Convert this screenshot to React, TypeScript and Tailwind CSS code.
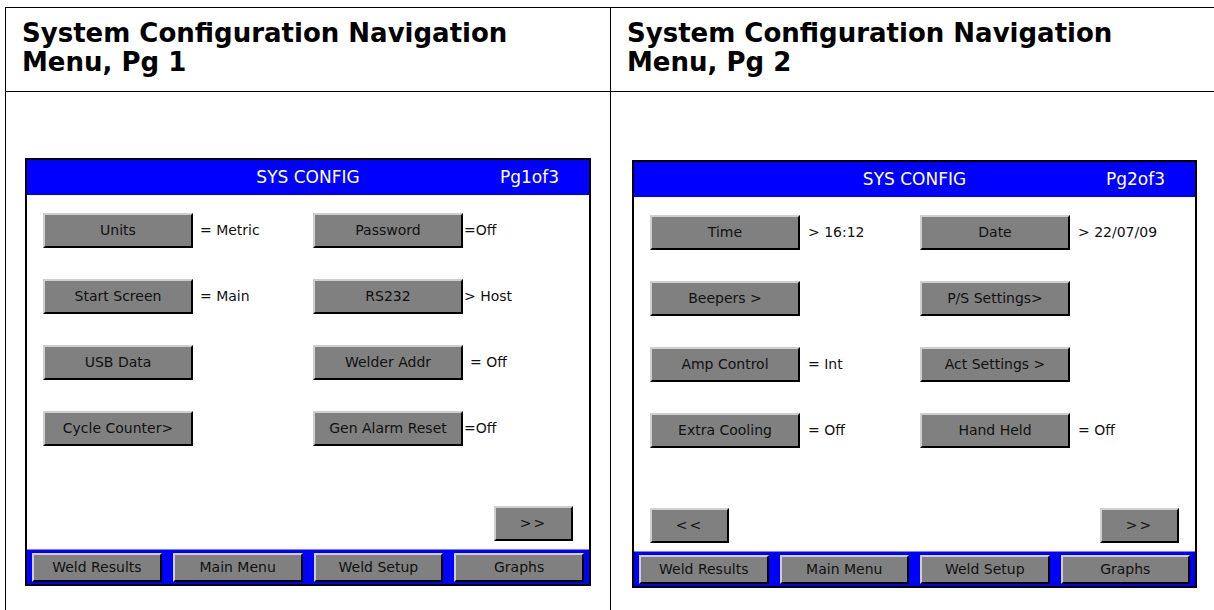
import React from 'react';

type Item = { label: string; value?: string; gap?: number };

const pageOne: Item[][] = [
  [{ label: 'Units', value: '= Metric', gap: 7 }, { label: 'Password', value: '=Off', gap: 1 }],
  [{ label: 'Start Screen', value: '= Main', gap: 7 }, { label: 'RS232', value: '> Host', gap: 1 }],
  [{ label: 'USB Data' }, { label: 'Welder Addr', value: '= Off', gap: 7 }],
  [{ label: 'Cycle Counter>' }, { label: 'Gen Alarm Reset', value: '=Off', gap: 1 }],
];

const pageTwo: Item[][] = [
  [{ label: 'Time', value: '> 16:12', gap: 8 }, { label: 'Date', value: '> 22/07/09', gap: 8 }],
  [{ label: 'Beepers >' }, { label: 'P/S Settings>' }],
  [{ label: 'Amp Control', value: '= Int', gap: 8 }, { label: 'Act Settings >' }],
  [{ label: 'Extra Cooling', value: '= Off', gap: 8 }, { label: 'Hand Held', value: '= Off', gap: 8 }],
];

const tabs = ['Weld Results', 'Main Menu', 'Weld Setup', 'Graphs'];

function Btn({ children, className = '' }: { children: React.ReactNode; className?: string }) {
  return (
    <div
      className={`flex items-center justify-center bg-[#808080] border-2 border-t-[#cfcfcf] border-l-[#cfcfcf] border-r-black border-b-black text-[14px] text-[#111] whitespace-nowrap ${className}`}
    >
      {children}
    </div>
  );
}

function Cell({ item, wide }: { item: Item; wide?: boolean }) {
  return (
    <div className={`flex items-center ${wide ? 'w-[270px]' : ''}`}>
      <Btn className="w-[150px] h-[35px]">{item.label}</Btn>
      {item.value && (
        <span
          className={`text-[14px] text-[#111] whitespace-nowrap ${item.gap === 1 ? 'ml-[1px]' : item.gap === 8 ? 'ml-[8px]' : 'ml-[7px]'}`}
        >
          {item.value}
        </span>
      )}
    </div>
  );
}

function Screen({ page, rows, back, className }: { page: string; rows: Item[][]; back?: boolean; className: string }) {
  return (
    <div className={`flex flex-col border-2 border-black bg-white font-['DejaVu_Sans',sans-serif] ${className}`}>
      <div className="grid h-[35px] shrink-0 grid-cols-[1fr_auto_1fr] items-center bg-[#0000ff] text-[17px] text-white">
        <span />
        <span>SYS CONFIG</span>
        <span className="justify-self-end pr-[30px]">{page}</span>
      </div>
      <div className="flex flex-1 flex-col px-[16px] pt-[18px] pb-[8px]">
        <div className="flex flex-col gap-[31px]">
          {rows.map((r, i) => (
            <div key={i} className="flex items-center">
              <Cell item={r[0]} wide />
              <Cell item={r[1]} />
            </div>
          ))}
        </div>
        <div className="mt-auto flex items-center justify-between">
          {back ? <Btn className="w-[79px] h-[35px] text-[12px] tracking-[2px]">&lt;&lt;</Btn> : <span />}
          <Btn className="w-[79px] h-[35px] text-[12px] tracking-[2px]">&gt;&gt;</Btn>
        </div>
      </div>
      <div className="flex h-[35px] shrink-0 items-center gap-[11px] border-t border-t-[#8080ff] bg-[#0000ff] px-[5px]">
        {tabs.map((t) => (
          <Btn key={t} className="h-[29px] flex-1">
            {t}
          </Btn>
        ))}
      </div>
    </div>
  );
}

export default function App() {
  return (
    <div className="h-[610px] w-[1214px] overflow-hidden bg-white pl-[5px] pt-[7px]">
      <div className="grid w-[1215px] grid-cols-[605px_610px] border-l border-t border-black">
        {/* header row */}
        <div className="h-[84px] border-b border-r border-black pl-[16px] pt-[11px] font-['DejaVu_Sans',sans-serif] text-[26px] font-bold leading-[29px] text-black">
          System Configuration Navigation
          <br />
          Menu, Pg 1
        </div>
        <div className="h-[84px] border-b border-black pl-[16px] pt-[11px] font-['DejaVu_Sans',sans-serif] text-[26px] font-bold leading-[29px] text-black">
          System Configuration Navigation
          <br />
          Menu, Pg 2
        </div>
        {/* screens */}
        <div className="h-[530px] border-r border-black pl-[19px] pt-[66px]">
          <Screen page="Pg1of3" rows={pageOne} className="h-[428px] w-[566px]" />
        </div>
        <div className="h-[530px] pl-[21px] pt-[68px]">
          <Screen page="Pg2of3" rows={pageTwo} back className="h-[428px] w-[565px]" />
        </div>
      </div>
    </div>
  );
}
